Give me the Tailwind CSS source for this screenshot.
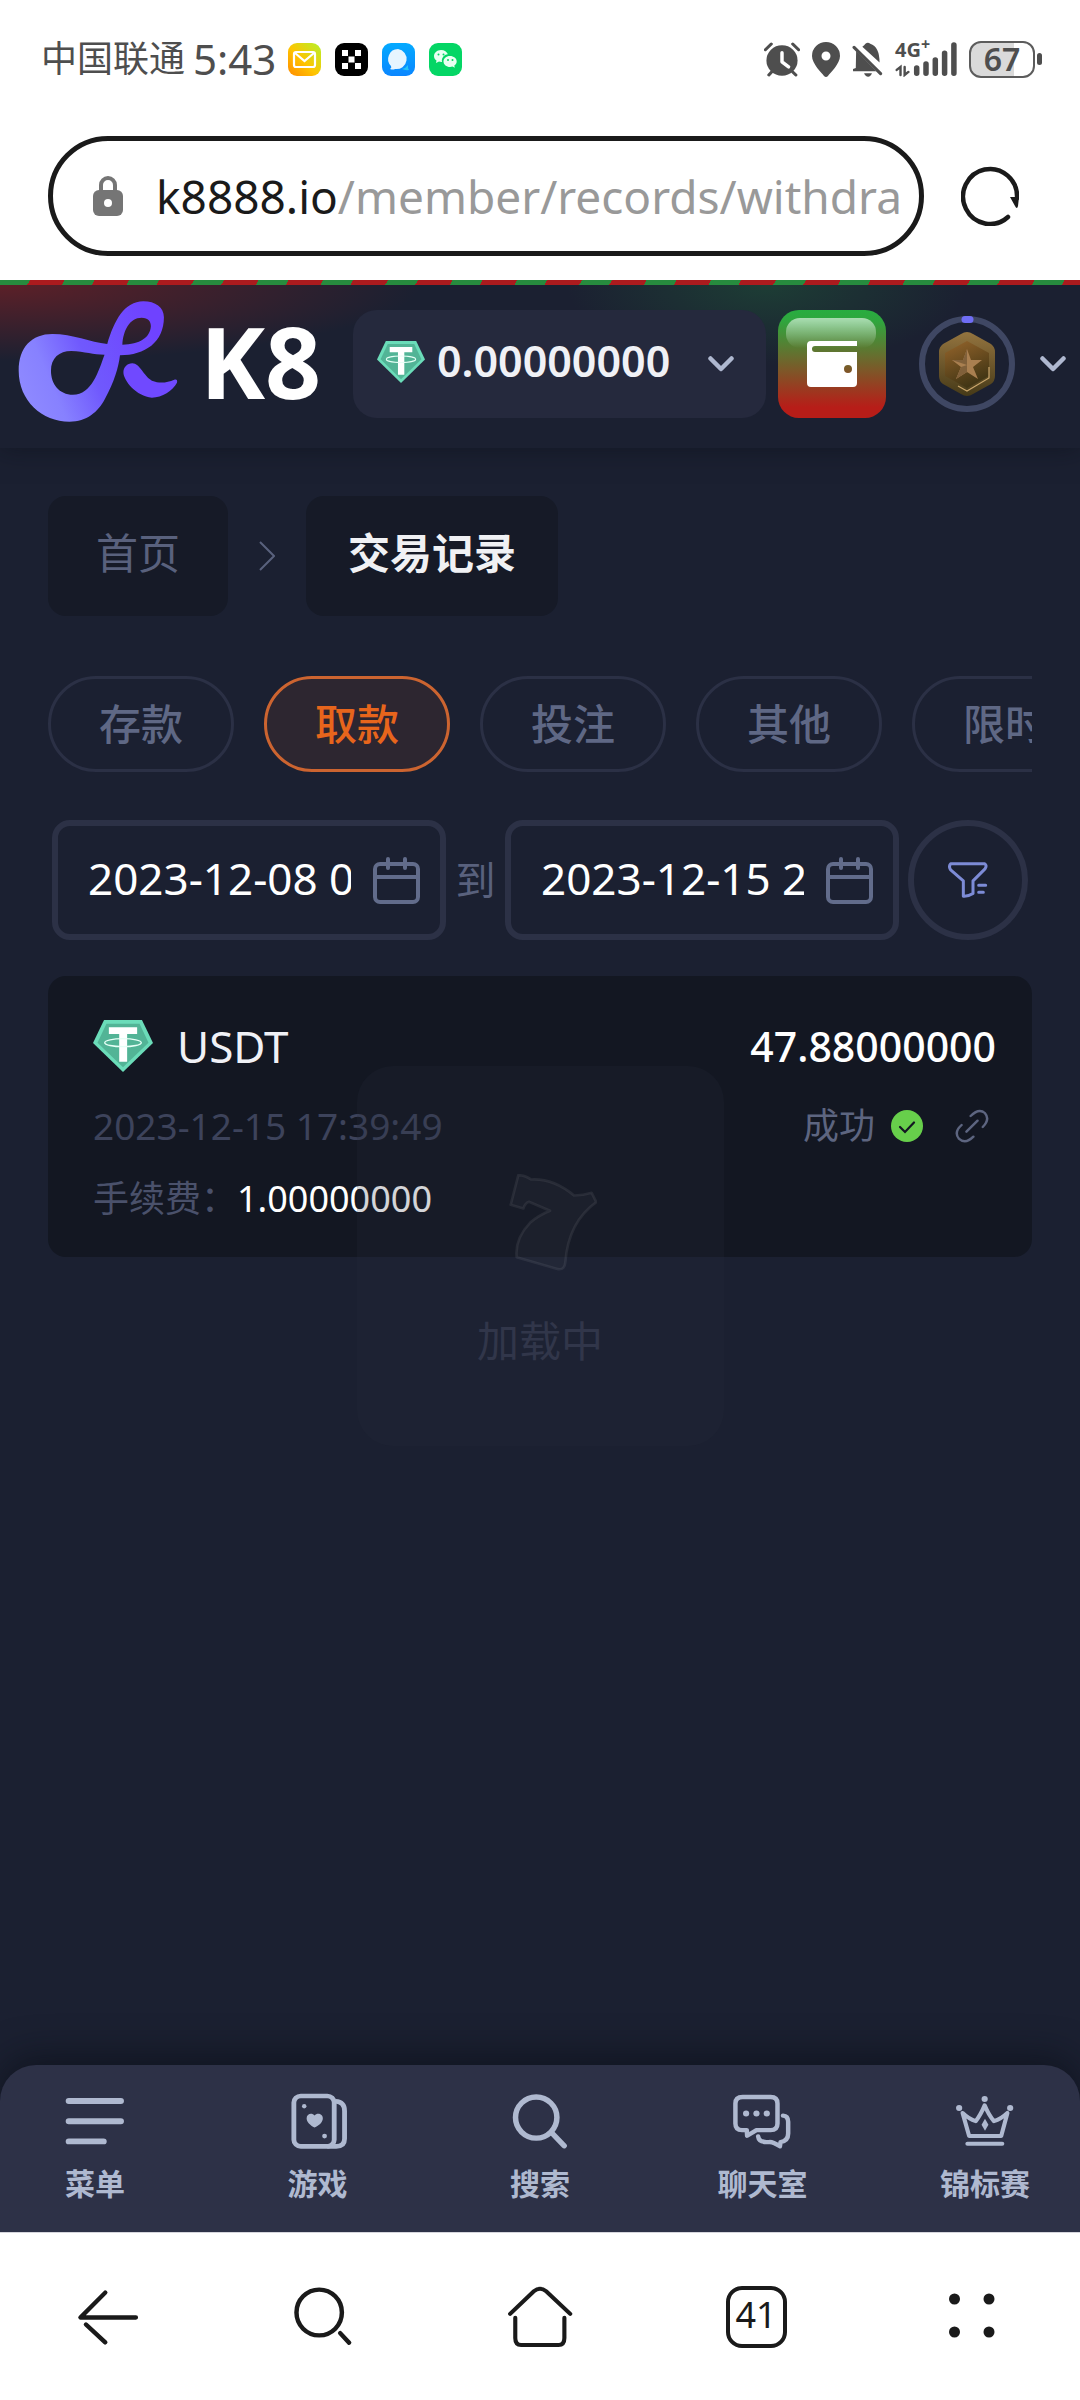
<!DOCTYPE html>
<html lang="zh-CN">
<head>
<meta charset="utf-8">
<meta name="viewport" content="width=device-width, initial-scale=1">
<title>交易记录 - K8</title>
<script src="https://cdn.jsdelivr.net/npm/@tailwindcss/browser@4"></script>
</head>
<body class="flex min-h-screen flex-col bg-white font-['Noto_Sans','Noto_Sans_CJK_SC',sans-serif]">

<svg class="hidden" aria-hidden="true">
  <symbol id="usdt" viewBox="270 177 174 156" preserveAspectRatio="none">
    <path d="M302 177H412L444 246L357 333L270 246Z" fill="#6bdcb9"/>
    <path d="M309 188H405L431 245L357 319L283 245Z" fill="#52b496"/>
    <path d="M316 199H398V219H369V302H346V219H316Z" fill="#fff"/>
    <ellipse cx="357" cy="245" rx="53" ry="12" fill="none" stroke="#e6fff6" stroke-width="4"/>
  </symbol>
  <symbol id="chevron" viewBox="0 0 26 16">
    <path d="M2.500 2.500L13 13L23.500 2.500" fill="none" stroke="#afb8d0" stroke-width="4.500" stroke-linecap="round" stroke-linejoin="round"/>
  </symbol>
  <symbol id="calendar" viewBox="0 0 47 47">
    <g fill="none" stroke="#626c8b" stroke-width="4" stroke-linecap="round"><rect x="2" y="7" width="43" height="38" rx="5"/><path d="M2 20H45M15 2V11M32 2V11"/></g>
  </symbol>
</svg>

<!-- Phone status bar -->
<div class="flex h-[118px] items-center justify-between pr-[38px] pl-[41px] text-[#4e4e4e]">
  <div class="flex items-center">
    <span class="text-4xl">中国联通</span>
    <span class="ml-2 text-[42px] leading-none">5:43</span>
    <div class="ml-3 flex gap-3.5">
      <svg class="size-[33px]" viewBox="0 0 33 33"><defs><linearGradient id="mail" x1="0" y1="1" x2="1" y2="0"><stop stop-color="#ff8a00"/><stop offset=".45" stop-color="#ffc400"/><stop offset="1" stop-color="#b4f22b"/></linearGradient></defs><rect width="33" height="33" rx="9" fill="url(#mail)"/><rect x="6" y="9" width="21" height="15" rx="2" fill="none" stroke="#fff" stroke-width="2.200"/><path d="M7 10L16.500 18L26 10" fill="none" stroke="#fff" stroke-width="2.200"/></svg>
      <svg class="size-[33px]" viewBox="0 0 33 33"><rect width="33" height="33" rx="9"/><path d="M7 7h6v6H7zM20 7h6v6h-6zM13.500 13.500h6v6h-6zM7 20h6v6H7zM20 20h6v6h-6z" fill="#fff"/></svg>
      <svg class="size-[33px]" viewBox="0 0 33 33"><defs><linearGradient id="msg" x2="0" y2="1"><stop stop-color="#04aaff"/><stop offset="1" stop-color="#0a86ff"/></linearGradient></defs><rect width="33" height="33" rx="9" fill="url(#msg)"/><path d="M20 26q4-1 6-4q-.5 3 1 5q-4 .5-7-1" fill="#27c3f5"/><path d="M16 6a10 10 0 1 1-3 20q-2 1-5 0q2-1 1-3A10 10 0 0 1 16 6" fill="#e6f5ff"/></svg>
      <svg class="size-[33px]" viewBox="0 0 33 33"><rect width="33" height="33" rx="9" fill="#04d665"/><path d="M12 7c-4 0-7 3-7 6 0 2 1 3.500 2.500 4.500L7 20l3-1.500q1 .5 3 .4c-1-5 4-8 6-7.500C18 9 15.500 7 12 7M21 13c-4 0-6.500 2.500-6.500 5.500s3 5.500 6.500 5.500l2.500-.4 2.300 1.200-.5-2.200c1.500-1 2.400-2.500 2.400-4.200 0-3-3-5.400-6.700-5.400" fill="#e9fff2"/><g fill="#04d665"><circle cx="9.500" cy="11.500" r="1"/><circle cx="14.500" cy="11.500" r="1"/><circle cx="19" cy="17" r="1"/><circle cx="23.500" cy="17" r="1"/></g></svg>
    </div>
  </div>
  <div class="flex items-center gap-3">
    <svg class="h-[35px] w-9" viewBox="653 123 104 104" preserveAspectRatio="none"><circle cx="705" cy="178" r="45" fill="#4e4e4e"/><path d="M657 146L674 129M753 146L736 129M675 212L667 221M736 212L745 221" stroke="#4e4e4e" stroke-width="9" stroke-linecap="round"/><path d="M705 155V182L724 197" fill="none" stroke="#fff" stroke-width="10" stroke-linecap="round" stroke-linejoin="round"/></svg>
    <svg class="h-[35px] w-7" viewBox="0 0 28 35"><path fill-rule="evenodd" d="M14 0A14 14 0 0 1 28 14C28 22 18 31 16 34Q14 36 12 34C10 31 0 22 0 14A14 14 0 0 1 14 0M14 9.500a4.500 4.500 0 1 0 0 9a4.500 4.500 0 1 0 0-9" fill="#4e4e4e"/></svg>
    <svg class="h-[35px] w-[31px]" viewBox="908 123 90 104" preserveAspectRatio="none"><g fill="#4e4e4e"><path d="M938 137Q944 132 947 128Q954 122 961 128Q988 137 988 184Z"/><path d="M920 150L978 210H911V203L919 200Z"/><path d="M943 216H966Q962 226 955 226Q947 226 943 216"/></g><path d="M914 139L991 217" stroke="#4e4e4e" stroke-width="9" stroke-linecap="round"/></svg>
    <div class="relative h-[35px] w-[62px]">
      <span class="absolute -top-1 left-0 text-xl leading-6 font-bold">4G<span class="absolute -top-1 left-full text-base leading-5">+</span></span>
      <svg class="h-[35px] w-[62px]" viewBox="1031 121 180 104" preserveAspectRatio="none"><g fill="none" stroke="#4e4e4e" stroke-linecap="round"><path stroke-width="16" d="M1094 198V214M1121 186V214M1148 174V214M1175 154V214M1202 130V214"/><path stroke-width="7" d="M1036 204L1047 195V219M1059 195V219L1070 210"/></g></svg>
    </div>
    <div class="flex items-center gap-0.5">
      <div class="flex h-[37px] w-[66px] items-center justify-center rounded-xl border-2 border-[#5c5c5c] bg-linear-to-r from-[#dadada] from-70% to-white to-70% text-[32px] leading-none font-semibold">67</div>
      <div class="h-3 w-[5px] rounded-sm bg-[#4e4e4e]"></div>
    </div>
  </div>
</div>

<!-- Address bar -->
<div class="mt-[18px] mb-6 flex items-center gap-[37px] pr-[61px] pl-12">
  <button type="button" aria-label="网址" class="flex h-[120px] min-w-0 flex-1 items-center rounded-full border-5 border-[#1a1a1a] pr-5 pl-10 text-left">
    <svg class="h-10 w-[30px] shrink-0" viewBox="0 0 30 40"><rect y="14" width="30" height="26" rx="6" fill="#757575"/><path d="M8 16V9a7 7 0 0 1 14 0V16" fill="none" stroke="#757575" stroke-width="4"/><circle cx="15" cy="27" r="4" fill="#fff"/></svg>
    <span class="ml-[33px] overflow-hidden text-[46px] leading-[64px] whitespace-nowrap text-[#999]"><span class="text-[#1a1a1a]">k8888.io</span>/member/records/withdraw</span>
  </button>
  <button type="button" aria-label="刷新" class="shrink-0"><svg class="h-[60px] w-[58px]" viewBox="0 0 58 60"><path d="M47 51A27 27.500 0 1 1 56 32" fill="none" stroke="#1a1a1a" stroke-width="4.500" stroke-linecap="round"/><path d="M49 31H58L57 40Q56 44 54 40Z" fill="#1a1a1a"/></svg></button>
</div>

<!-- Site -->
<div class="relative flex flex-1 flex-col overflow-hidden bg-[#1b2031]">
  <div class="relative z-10 h-[5px] bg-[repeating-linear-gradient(120deg,#278b3e_0_26px,#ab1b1e_26px_56px)]"></div>
  <header class="flex h-[163px] items-center bg-[#1b2031] bg-[radial-gradient(420px_76px_at_0_0,#5c2028,transparent),radial-gradient(200px_80px_at_71%_0,#1d3d35,transparent)] pr-3.5 pb-[5px] pl-[18px] shadow-[0_0_24px_rgba(10,14,22,0.5)]">
    <a href="#" aria-label="K8" class="flex shrink-0 items-center gap-[22px] pb-1.5">
      <svg class="h-[121px] w-40" viewBox="50 91 466 363" preserveAspectRatio="none">
        <defs><linearGradient id="brand" x1="0" y1=".75" x2="1" y2=".4"><stop stop-color="#8f8aff"/><stop offset=".22" stop-color="#8781ff"/><stop offset=".5" stop-color="#7059fd"/><stop offset="1" stop-color="#6f42ff"/></linearGradient></defs>
        <g fill="url(#brand)" fill-rule="evenodd"><path d="M310 220C260 215 210 190 150 190C90 190 52 230 52 300C52 390 120 453 200 453C250 453 283 424 303 385C330 335 343 290 347 254C420 254 475 215 475 140C475 110 450 92 415 92C360 92 330 150 310 220ZM302 252C285 300 265 372 210 372C170 372 146 340 146 300C146 262 170 241 205 241C245 243 270 252 302 252ZM354 222C356 180 375 141 410 141C430 141 437 152 437 167C435 200 405 222 354 222Z"/></g>
        <path d="M383 278C405 278 415 315 440 330C465 340 485 335 505 327C512 325 515 328 513 336C500 360 470 380 440 381C395 378 357 330 357 305C357 290 368 278 383 278Z" fill="#7049ff"/>
      </svg>
      <span class="text-[98px] leading-none font-bold text-white">K8</span>
    </a>
    <div class="ml-auto flex shrink-0 items-center">
      <button type="button" class="flex h-[108px] w-[413px] items-center rounded-3xl bg-[#25293d] pl-6">
        <svg class="mb-1 h-[42px] w-12"><use href="#usdt"/></svg>
        <span class="mb-1.5 ml-3 text-[43px] leading-[60px] font-semibold text-[#f0f1f6]">0.00000000</span>
        <svg class="mr-8 ml-auto h-4 w-[26px]"><use href="#chevron"/></svg>
      </button>
      <button type="button" aria-label="钱包" class="ml-3">
        <svg class="size-[108px]" viewBox="0 0 108 108"><defs><linearGradient id="xmas" x2="0" y2="1"><stop stop-color="#28ad40"/><stop offset=".1" stop-color="#2fa63e"/><stop offset=".9" stop-color="#b71d18"/></linearGradient><linearGradient id="gloss" x2="0" y2="1"><stop stop-color="#fff" stop-opacity=".6"/><stop offset="1" stop-color="#fff" stop-opacity="0"/></linearGradient></defs><rect width="108" height="108" rx="21" fill="url(#xmas)"/><rect x="8" y="8" width="90" height="30" rx="14" fill="url(#gloss)"/><path fill="#fff" fill-rule="evenodd" d="M33 31H79V36H37Q34 36 34 39Q34 42 37 42H79V73Q79 77 75 77H33Q29 77 29 73V35Q29 31 33 31M70 55a4 4 0 1 0 0 8a4 4 0 1 0 0-8"/></svg>
      </button>
      <button type="button" aria-label="用户菜单" class="ml-8 flex items-center gap-6">
        <svg class="size-[98px]" viewBox="0 0 98 98"><defs><linearGradient id="rim" x2="0" y2="1"><stop stop-color="#94743f"/><stop offset="1" stop-color="#463a18"/></linearGradient><linearGradient id="face" x1=".3" x2=".7" y2="1"><stop stop-color="#8d6029"/><stop offset="1" stop-color="#3a3112"/></linearGradient></defs>
          <circle cx="49" cy="49" r="45" fill="none" stroke="#3f4763" stroke-width="6"/><path d="M47 4.500H52" stroke="#6f6df5" stroke-width="7" stroke-linecap="round"/>
          <path d="M43 19Q49 15 55 19L73 29Q77 32 77 37V61Q77 66 73 69L55 79Q49 83 43 79L25 69Q21 66 21 61V37Q21 32 25 29Z" fill="url(#rim)"/><path d="M49 26L71 38V61L49 73L27 61V38Z" fill="url(#face)"/><path d="M40 71L49 76L71 63V52" fill="none" stroke="#c9a56b" stroke-width="1.200"/>
          <path d="M49 34L53 45H64L55 52L60 64L49 57L38 64L43 52L34 45H45Z" fill="#a97f50"/><path d="M49 34V57L38 64L43 52L49 50L34 45H45Z" fill="#80603a"/></svg>
        <svg class="h-4 w-[26px]"><use href="#chevron"/></svg>
      </button>
    </div>
  </header>

  <main class="flex-1 px-12 pt-12">
    <nav aria-label="面包屑" class="flex items-center text-[42px] leading-[60px]">
      <a href="#" class="flex h-[120px] items-center rounded-[18px] bg-[#161a27] px-12 pb-1.5 text-[#59617d]">首页</a>
      <svg class="mx-[31px] h-[30px] w-4" viewBox="0 0 16 30"><path d="M1 1L15 15L1 29" fill="none" stroke="#59617d" stroke-width="2"/></svg>
      <a href="#" aria-current="page" class="flex h-[120px] items-center rounded-[18px] bg-[#161a27] px-[42px] pb-1.5 font-bold text-[#f0f1f4]">交易记录</a>
    </nav>

    <div class="mt-[60px] flex gap-[30px] overflow-hidden text-[42px] leading-[60px] font-medium whitespace-nowrap text-[#5f6885]">
      <button type="button" class="h-24 shrink-0 rounded-full border-3 border-[#2b3045] px-12">存款</button>
      <button type="button" class="h-24 shrink-0 rounded-full border-3 border-[#cc6430] bg-[#2d2630] px-12 text-[#e7651c]">取款</button>
      <button type="button" class="h-24 shrink-0 rounded-full border-3 border-[#2b3045] px-12">投注</button>
      <button type="button" class="h-24 shrink-0 rounded-full border-3 border-[#2b3045] px-12">其他</button>
      <button type="button" class="h-24 shrink-0 rounded-full border-3 border-[#2b3045] px-12">限时活动</button>
    </div>

    <form class="mt-12 flex items-center px-1">
      <label class="flex h-[120px] min-w-0 flex-1 items-center rounded-[18px] border-6 border-[#2c3146] pr-5 pl-[30px]">
        <input type="text" aria-label="开始时间" value="2023-12-08 00:00:00" class="mb-1 min-w-0 flex-1 bg-transparent text-[44px] leading-[60px] text-white outline-none">
        <svg class="ml-[22px] size-[47px] shrink-0"><use href="#calendar"/></svg>
      </label>
      <span class="w-[59px] shrink-0 text-center text-[40px] leading-[60px] text-[#59617d]">到</span>
      <label class="flex h-[120px] min-w-0 flex-1 items-center rounded-[18px] border-6 border-[#2c3146] pr-5 pl-[30px]">
        <input type="text" aria-label="结束时间" value="2023-12-15 23:59:59" class="mb-1 min-w-0 flex-1 bg-transparent text-[44px] leading-[60px] text-white outline-none">
        <svg class="ml-[22px] size-[47px] shrink-0"><use href="#calendar"/></svg>
      </label>
      <button type="button" aria-label="筛选" class="ml-[9px] flex size-[120px] shrink-0 items-center justify-center rounded-full border-6 border-[#2c3146]">
        <svg class="h-9 w-10" viewBox="1104 632 120 107"><g fill="none" stroke="#7d8bd6" stroke-width="9" stroke-linejoin="round" stroke-linecap="round"><path d="M1112 637H1214Q1222 642 1215 652L1179 688V726Q1165 735 1150 734V688L1112 655Q1105 645 1112 637Z"/><path d="M1196 701H1217M1196 722H1210"/></g></svg>
      </button>
    </form>

    <article class="mt-9 rounded-[18px] bg-[#131722] pt-10 pr-9 pb-7 pl-[45px]">
      <div class="flex h-15 items-center">
        <svg class="h-[52px] w-15"><use href="#usdt"/></svg>
        <span class="ml-6 text-[44px] leading-[60px] text-[#f0f1f6]">USDT</span>
        <span class="ml-auto text-[41px] leading-[60px] font-medium text-white">47.88000000</span>
      </div>
      <div class="mt-5 flex h-15 items-center text-4xl">
        <time class="text-[37px] text-[#3d435b]">2023-12-15 17:39:49</time>
        <span class="mr-4 ml-auto text-[#5d6580]">成功</span>
        <svg class="size-8" viewBox="0 0 32 32"><circle cx="16" cy="16" r="16" fill="#67cf4b"/><path d="M9 17L14 22L23 12.500" fill="none" stroke="#131722" stroke-width="2.200" stroke-linecap="round"/></svg>
        <a href="#" aria-label="交易链接" class="mr-[7px] ml-8"><svg class="size-[34px]" viewBox="1206 450 98 102" preserveAspectRatio="none"><g fill="none" stroke="#5d6580" stroke-width="7" stroke-linecap="round"><path d="M1251 471Q1275 446 1292 462Q1308 481 1286 504"/><path d="M1225 498Q1202 519 1217 539Q1236 557 1259 533M1239 518L1271 485"/></g></svg></a>
      </div>
      <div class="mt-[13px] flex h-15 items-center text-4xl">
        <span class="text-[#4a516b]">手续费：</span><span class="text-white">1.00000000</span>
      </div>
    </article>
  </main>

  <nav aria-label="主导航" class="flex h-[167px] justify-between rounded-t-[36px] bg-[#2d3147] px-[50px] pt-7 text-3xl leading-9 font-bold text-[#afb9d0] shadow-[0_-8px_36px_rgba(10,14,22,0.6)]">
    <a href="#" class="flex w-[90px] flex-col items-center gap-4">
      <svg class="h-[57px] w-15" viewBox="190 158 174 172" preserveAspectRatio="none"><path d="M201 182H352M201 243H352M201 304H302" stroke="#afb9d0" stroke-width="18" stroke-linecap="round"/></svg>菜单</a>
    <a href="#" class="flex w-[90px] flex-col items-center gap-4">
      <svg class="h-[57px] w-15" viewBox="836 158 174 172" preserveAspectRatio="none"><g fill="none" stroke="#afb9d0" stroke-width="14"><rect x="853" y="167" width="117" height="152" rx="20"/><path d="M974 183Q1000 185 1000 212V296Q1000 319 976 319H950"/></g><g fill="#afb9d0"><path d="M913 262C900 255 890 246 890 234C890 220 906 216 913 226C920 216 937 220 937 234C937 246 926 256 913 262"/><circle cx="883" cy="198" r="6.500"/><circle cx="942" cy="288" r="7"/></g></svg>游戏</a>
    <a href="#" class="flex w-[90px] flex-col items-center gap-4">
      <svg class="h-[57px] w-15" viewBox="-87 158 174 172" preserveAspectRatio="none"><g fill="none" stroke="#afb9d0" stroke-width="16" stroke-linecap="round"><ellipse cx="-11" cy="232" rx="60" ry="62"/><path d="M36 280L70 317"/></g></svg>搜索</a>
    <a href="#" class="flex w-[90px] flex-col items-center gap-4">
      <svg class="h-[57px] w-15" viewBox="559 158 174 172" preserveAspectRatio="none"><g fill="none" stroke="#afb9d0" stroke-width="13" stroke-linejoin="round" stroke-linecap="round"><path d="M587 170H668Q688 170 688 190V250Q688 270 668 270H627L600 287L599 270H585Q566 270 566 250V190Q566 170 587 170Z"/><path d="M704 226Q719 227 719 245V280Q719 302 697 306L695 319Q675 305 664 306H656Q634 306 632 289"/></g><g fill="#afb9d0"><circle cx="597" cy="220" r="9"/><circle cx="627" cy="220" r="9"/><circle cx="657" cy="220" r="9"/></g></svg>聊天室</a>
    <a href="#" class="flex w-[90px] flex-col items-center gap-4">
      <svg class="h-[57px] w-15" viewBox="1204 158 174 172" preserveAspectRatio="none"><g fill="none" stroke="#afb9d0" stroke-width="12" stroke-linejoin="round" stroke-linecap="round"><path d="M1226 218Q1245 237 1264 243Q1278 225 1290 195Q1302 225 1317 243Q1337 237 1356 218L1338 288H1245Z"/><path d="M1240 311H1341"/></g><g fill="#afb9d0"><circle cx="1216" cy="203" r="9"/><circle cx="1290" cy="176" r="9"/><circle cx="1364" cy="203" r="9"/><path d="M1291 236L1301 254L1291 272L1281 254Z"/></g></svg>锦标赛</a>
  </nav>

  <!-- Loading toast, centred over the site -->
  <div role="status" class="absolute inset-0 m-auto flex h-[380px] w-[367px] flex-col items-center rounded-[36px] bg-[#262b3e]/20 pt-[108px]">
    <svg class="h-[97px] w-[114px]" viewBox="459 376 342 290"><path d="M565 379Q588 380 603 392Q670 388 732 440Q760 440 785 432L799 460Q715 520 706 640Q704 664 685 661L560 625Q554 570 600 522Q625 500 660 486L597 459Q585 463 580 479L542 468Z" fill="#ffffff06" stroke="#ffffff12" stroke-width="8" stroke-linejoin="round"/></svg>
    <p class="mt-10 text-[42px] leading-[60px] text-[#31364a]">加载中</p>
  </div>
</div>

<!-- Browser toolbar -->
<div class="grid h-[168px] grid-cols-5 place-items-center border-t border-[#d5d5dc]">
  <button type="button" aria-label="返回"><svg class="h-[63px] w-16" viewBox="221 733 186 190" preserveAspectRatio="none"><path d="M306 756L234 831H395M250 852L306 906" fill="none" stroke="#1a1a1a" stroke-width="13" stroke-linecap="round" stroke-linejoin="round"/></svg></button>
  <button type="button" aria-label="搜索"><svg class="h-[63px] w-16" viewBox="847 733 186 190" preserveAspectRatio="none"><g fill="none" stroke="#1a1a1a" stroke-width="13" stroke-linecap="round"><ellipse cx="926" cy="816" rx="66" ry="69"/><path d="M987 878L1013 907"/></g></svg></button>
  <button type="button" aria-label="主页"><svg class="h-[63px] w-[68px]" viewBox="-99 733 198 190" preserveAspectRatio="none"><path d="M-87 820L-18 752Q0 737 18 752L88 820M-72 832V893Q-72 914 -55 914H54Q71 914 71 893V832" fill="none" stroke="#1a1a1a" stroke-width="12" stroke-linecap="round"/></svg></button>
  <button type="button" aria-label="标签页 41" class="flex h-[62px] w-[61px] items-center justify-center rounded-2xl border-4 border-[#1a1a1a] pb-1 text-4xl leading-none text-[#1a1a1a]">41</button>
  <button type="button" aria-label="更多"><svg class="h-12 w-[46px]" viewBox="0 0 46 48" fill="#1a1a1a"><circle cx="5.500" cy="6" r="5.500"/><circle cx="40" cy="6" r="5.500"/><circle cx="5.500" cy="39" r="5.500"/><circle cx="40" cy="39" r="5.500"/></svg></button>
</div>

</body>
</html>
